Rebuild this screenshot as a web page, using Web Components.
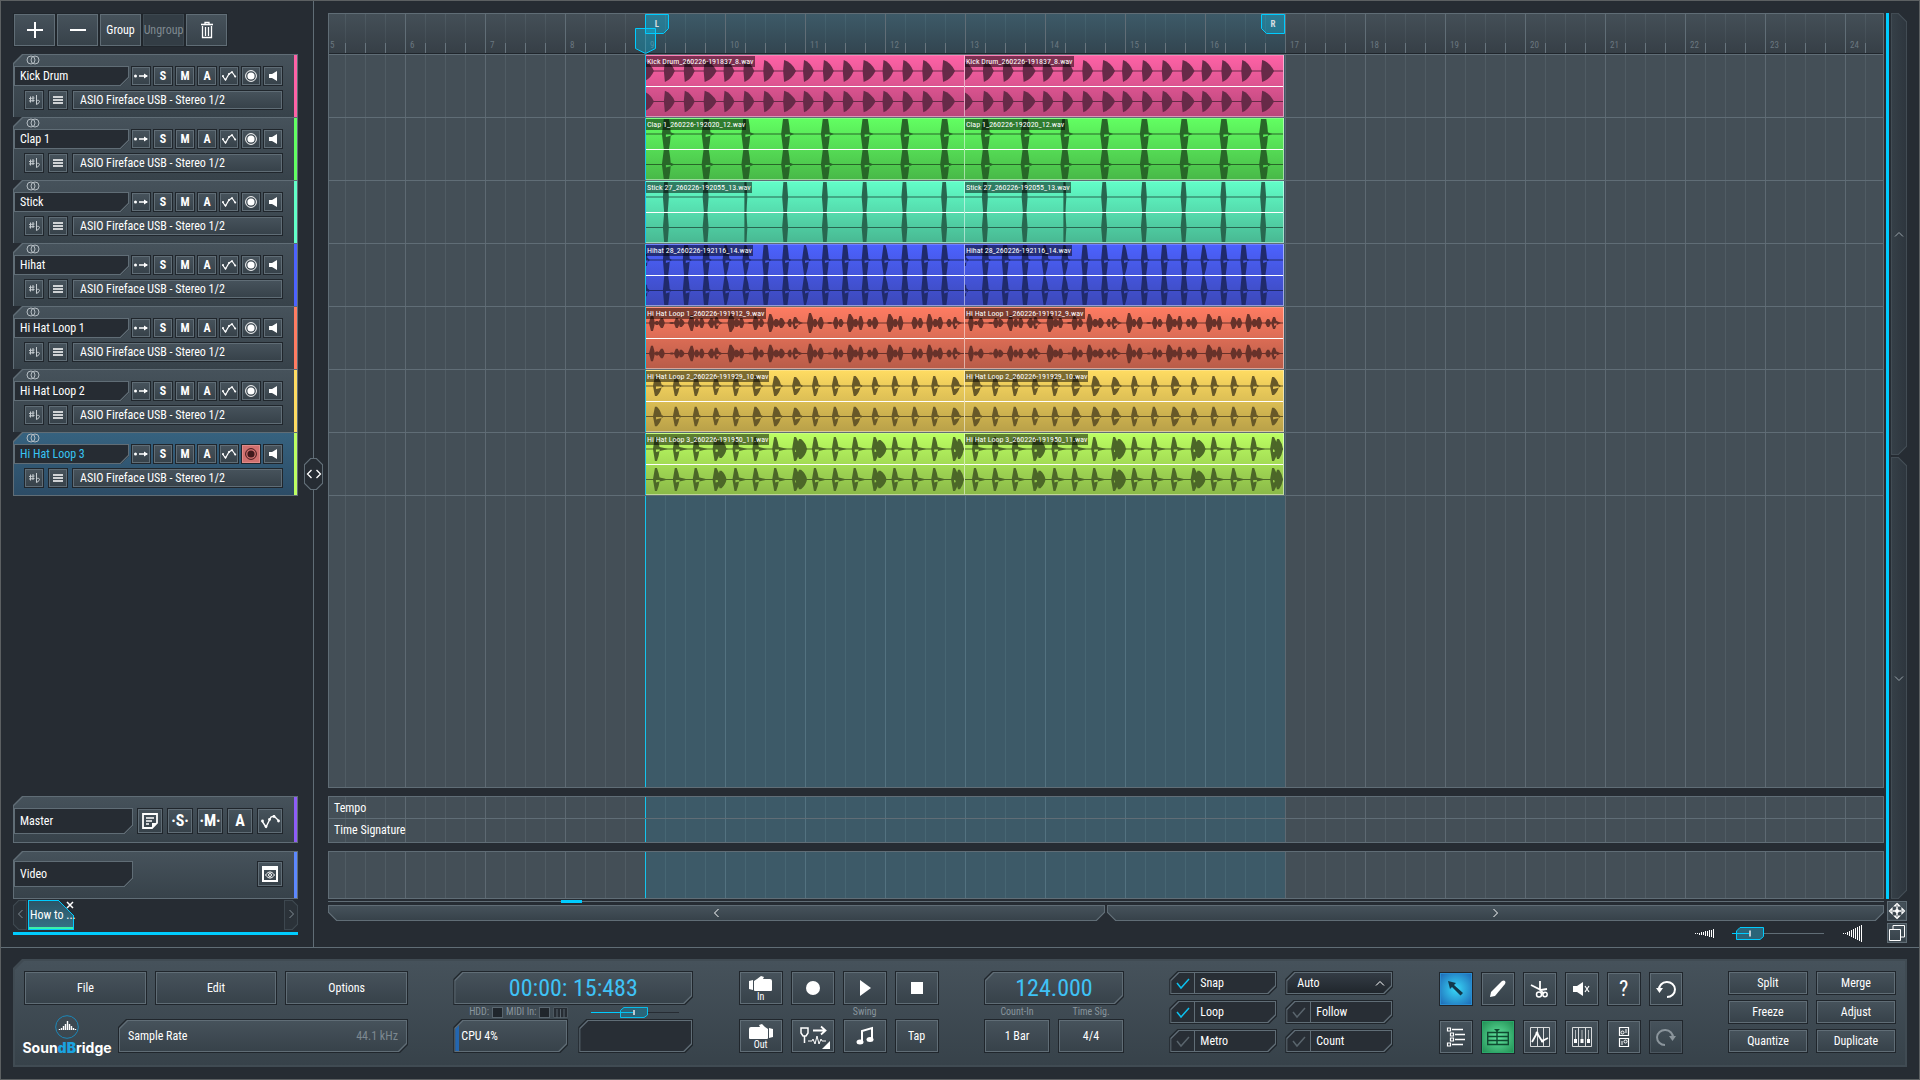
<!DOCTYPE html>
<html lang="en">
<head>
<meta charset="utf-8">
<title>SoundBridge</title>
<style>
    html, body {
        height: 100%;
        margin: 0;
    }
    body {
        --bg: #262c33;
        --line: #606d76;
        --edge: #20262c;
        --cyan: #00ccff;
        --face: linear-gradient(#46525b, #37424a);
        background: var(--bg);
        color: #fff;
        font: 12px/16px "Roboto Condensed", "Liberation Sans Narrow", "Liberation Sans", sans-serif;
    }
</style>
</head>
<body>
<daw-app></daw-app>

<script>
/**
 * Styles shared by every element
 */
const BASE = `
    * { box-sizing: border-box; }
    :host { display: block; box-sizing: border-box; }
    button, input, select { font: inherit; color: inherit; margin: 0; }
    svg { display: block; }
`;

/**
 * Icon drawings: [width, height, markup]
 */
const ICONS = {
    plus: [16, 16, '<path d="M8 0v16M0 8h16" stroke-width="2"/>'],
    minus: [16, 16, '<path d="M0 8h16" stroke-width="2"/>'],
    trash: [12, 16, '<path d="M0 2.500h12" stroke-width="1.600"/><path d="M4 3V.5h4V3M1.500 4v11.500h9V4M4.500 5v9M7.500 5v9" stroke-width="1.300"/>'],
    rings: [14, 10, '<circle cx="5" cy="5" r="4"/><circle cx="9" cy="5" r="4"/>'],
    route: [14, 8, '<circle cx="1.500" cy="4" r="1.500" class="f"/><path d="M5 4h8" stroke-width="1.500"/><path d="M10 1.500 14 4l-4 2.500z" class="f"/>'],
    curve: [14, 10, '<path d="M.5 5l3 4 3.500-6 3-2 3.500 5" stroke-width="1.200"/><circle cx="1" cy="5" r="1" class="f"/><circle cx="3.500" cy="8.500" r="1" class="f"/><circle cx="7" cy="3" r="1" class="f"/><circle cx="10" cy="1.200" r="1" class="f"/><circle cx="13.200" cy="5.500" r="1" class="f"/>'],
    curveBig: [19, 13, '<path d="M1 6l4 6 3-6 2-4 3-1 5 5" stroke-width="1.400"/><circle cx="1.500" cy="6" r="1.400" class="f"/><circle cx="5" cy="11.500" r="1.400" class="f"/><circle cx="8.500" cy="4.500" r="1.400" class="f"/><circle cx="13" cy="1.500" r="1.400" class="f"/><circle cx="17.500" cy="6" r="1.400" class="f"/>'],
    arm: [12, 12, '<circle cx="6" cy="6" r="5.400"/><circle cx="6" cy="6" r="3.600" class="f"/>'],
    speaker: [8, 10, '<path d="M0 3h3l5-3v10L3 7H0z" class="f"/>'],
    sharp: [11, 10, '<path d="M1.500 1.500v6M4 1v6M0 3.500l5.500-.5M0 6l5.500-.5M7.500 0v9.500c4-2 4-5 0-4"/>'],
    list: [10, 8, '<path d="M0 1h10M0 4h10M0 7h10" stroke-width="1.600"/>'],
    note: [16, 16, '<path d="M1 1h14v9l-5 5H1z" stroke-width="1.800"/><path d="M4 5h8M4 8h6M4 11h3" stroke-width="1.300"/><path d="M15 10h-5v5z" class="f"/>'],
    preview: [16, 16, '<path d="M1 2.500h14V15H1z" stroke-width="2"/><path d="M0 0h16v4H0z" class="f"/><path d="M3.500 9c3-4 6-4 9 0-3 4-6 4-9 0z"/><circle cx="8" cy="9" r="1.500"/>'],
    left: [5, 10, '<path d="M4.500 1l-4 4 4 4"/>'],
    right: [5, 10, '<path d="M.5 1l4 4-4 4"/>'],
    up: [10, 5, '<path d="M1 4.500l4-4 4 4"/>'],
    down: [10, 5, '<path d="M1 .5l4 4 4-4"/>'],
    split: [14, 10, '<path d="M4.500 1l-4 4 4 4M9.500 1l4 4-4 4" stroke-width="1.300"/>'],
    close: [6, 6, '<path d="M0 0l6 6M6 0L0 6" stroke-width="1.500"/>'],
    logo: [24, 24, '<circle cx="12" cy="12" r="11.300" stroke="#1c87b8"/><path d="M4.500 15v-1M6.500 15v-2M8.500 15v-4M10.500 15V9M12.500 15V6M14.500 15V9M16.500 15v-4M18.500 15v-2M20.500 15v-1" stroke-width="1.400"/>'],
    camIn: [24, 17, '<path d="M0 6l4-1v10l-4-1zM5 6l3-2 4-3 3 1-1 2h7q2 0 2 2v9q0 1-1 1H6q-1 0-1-1z" class="f"/>'],
    camOut: [24, 17, '<path d="M24 6l-4-1v10l4-1zM19 6l-3-2-3-3-3 1 1 2H2Q0 4 0 6v9q0 1 1 1h17q1 0 1-1z" class="f"/>'],
    record: [14, 14, '<circle cx="7" cy="7" r="7" class="f"/>'],
    play: [12, 16, '<path d="M1 0v16l11-8z" class="f"/>'],
    stop: [12, 12, '<path d="M0 0h12v12H0z" class="f"/>'],
    punch: [36, 24, '<path d="M6 4h7v5l-2 3H8L6 9zM9.500 12v7" stroke-width="1.500"/><path d="M18 6.500h12M26 2.500l4.500 4-4.500 4" stroke-width="1.800"/><path d="M13 17h4l1-2 2 5 2-8 2 8 2-5 1 2h4"/><path d="M35 17v8h-8z" class="f"/>'],
    music: [18, 18, '<path d="M6 15V4l10-3v11" stroke-width="2"/><ellipse cx="4" cy="15" rx="3.500" ry="2.500" class="f"/><ellipse cx="14" cy="12.500" rx="3.500" ry="2.500" class="f"/>'],
    piano: [15, 11, '<path d="M.5.500h14v10H.5z" fill="#262c33" stroke="#4d5860"/><path d="M4 2v9M7.500 2v9M11 2v9" stroke="#59656e"/>'],
    arrow: [16, 16, '<path d="M0 0l8 2-2 2 9 8-2.500 2.500L4 6 2 8z" fill="#12384a" stroke="none"/>'],
    pencil: [18, 18, '<path d="M1 17l1-5L13 1q2-1 3 0t0 3L6 16z" class="f"/>'],
    scissors: [18, 18, '<path d="M9 1v9l4 4M0 5l10 5 6-1" stroke-width="1.800"/><circle cx="8" cy="14.500" r="2.500" stroke-width="1.500"/><circle cx="14" cy="14.500" r="2.200" stroke-width="1.500"/>'],
    mute: [17, 14, '<path d="M0 4h4l6-4v14l-6-4H0z" class="f"/><path d="M12 4l4 6M16 4l-4 6" stroke-width="1.200"/>'],
    undo: [20, 18, '<path d="M3 10a8 7.500 0 1 1 8 7" stroke-width="2"/><path d="M0 8h7l-3.500 5z" class="f"/>'],
    redo: [20, 18, '<path d="M17 10a8 7.500 0 1 0-8 7" stroke-width="2"/><path d="M20 8h-7l3.500 5z" class="f"/>'],
    tree: [20, 20, '<path d="M1.500 1h3v3h-3zM4.500 6h3v3h-3zM4.500 11h3v3h-3zM1.500 16h3v3h-3z" stroke-width="1.200"/><path d="M6 2.500h11M9 7.500h10M9 12.500h10M6 17.500h11" stroke-width="1.600"/>'],
    grid: [22, 16, '<path d="M.7 3.500h20.600v12H.7zM1 7.500h20M1 11.500h20M10 2v14" stroke="#0f4a30" stroke-width="1.400"/><path d="M7 0h6l-3 3z" fill="#0f4a30" stroke="none"/>'],
    automation: [20, 20, '<path d="M.5.500h19v19H.5zM7.500 1v18M13.500 1v18" opacity=".8"/><path d="M2 15l5-9 5 8 6-3" stroke-width="1.800"/><circle cx="7" cy="6" r="1.500" class="f"/><circle cx="12.500" cy="14" r="1.500" class="f"/>'],
    mixer: [20, 20, '<path d="M.5.500h19v19H.5zM6.500 1v18M13.500 1v18" opacity=".8"/><path d="M3.500 3v9M10 3v9M16.500 3v9" opacity=".6"/><path d="M2 12h3v4H2zM8.500 12h3v4h-3zM15 12h3v4h-3z" class="f"/>'],
    rack: [10, 20, '<path d="M.5.500h9v8h-9zM.5 11.500h9v8h-9z" stroke-width="1.200"/><circle cx="3.500" cy="5.500" r="1.500"/><circle cx="6.500" cy="14.500" r="1.500"/><path d="M7 2v4M3 14v4"/>'],
    move: [16, 16, '<path d="M8 .5l2.500 2.500h-5zM8 15.500l2.500-2.500h-5zM.5 8l2.500-2.500v5zM15.500 8l-2.500-2.500v5z" stroke-width="1.200"/><path d="M8 4v8M4 8h8" stroke-width="1.500"/><circle cx="8" cy="8" r="2" class="f"/>'],
    windows: [16, 16, '<path d="M4 4V.5h11.500V12H12M.5 4.500h11v11H.5z"/>'],
    zoomOut: [20, 9, '<path d="M1.500 4v1M3.500 4v1M5.500 4v2M7.500 3v3M9.500 3v3M11.500 2v5M13.500 2v5M15.500 1v7M17.500 1v7M19.500 0v9"/>'],
    zoomIn: [20, 17, '<path d="M1.500 8v1M3.500 8v1M5.500 7v3M7.500 6v5M9.500 5v7M11.500 4v9M13.500 3v11M15.500 2v13M17.500 1v15M19.500 0v17"/>'],
    check: [14, 12, '<path d="M1 6l4 5 8-9" stroke-width="1.500"/>']
};

class DawIcon extends HTMLElement {
    constructor() {
        super();
        this.attachShadow({ mode: 'open' });
    }
    connectedCallback() {
        const [w, h, body] = ICONS[this.getAttribute('name')];
        this.shadowRoot.innerHTML = `
            <style>
                :host { display: inline-block; flex: none; }
                svg { display: block; overflow: visible; }
                .f { fill: currentColor; stroke: none; }
            </style>
            <svg width="${w}" height="${h}" viewBox="0 0 ${w} ${h}" fill="none" stroke="currentColor" aria-hidden="true">${body}</svg>
        `;
    }
}
customElements.define('daw-icon', DawIcon);

/**
 * Square bevelled button, the face is set with --face
 */
class DawButton extends HTMLElement {
    constructor() {
        super();
        this.attachShadow({ mode: 'open' });
    }
    connectedCallback() {
        const label = this.getAttribute('label');
        this.shadowRoot.innerHTML = `
            <style>${BASE}
                :host { border: 1px solid var(--edge); }
                :host([dim]) { color: #8b959c; --line: #4b565f; }
                :host([off]) { --face: #333d45; --line: #3d4850; color: #7f8990; }
                button {
                    display: flex;
                    flex-direction: column;
                    align-items: center;
                    justify-content: center;
                    width: 100%;
                    height: 100%;
                    padding: 0;
                    border: 1px solid var(--line);
                    background: var(--face);
                    white-space: nowrap;
                }
            </style>
            <button type="button" ${label ? `aria-label="${label}"` : ''}><slot></slot></button>
        `;
    }
}
customElements.define('daw-button', DawButton);

/**
 * Box with cut corners and a line that follows them.
 * --rim is the width of the dark edge outside of the line
 */
class CutBox extends HTMLElement {
    constructor() {
        super();
        this.attachShadow({ mode: 'open' });
        this.shadowRoot.innerHTML = `
            <style>${BASE}
                :host {
                    --tl: 8px; --tr: 0px; --br: 8px; --bl: 0px;
                    --shape: polygon(var(--tl) 0, calc(100% - var(--tr)) 0, 100% var(--tr), 100% calc(100% - var(--br)), calc(100% - var(--br)) 100%, var(--bl) 100%, 0 calc(100% - var(--bl)), 0 var(--tl));
                    display: grid;
                    padding: var(--rim, 1px);
                    background: var(--edge);
                    clip-path: var(--shape);
                }
                .line {
                    display: grid;
                    min-width: 0;
                    padding: 1px;
                    background: var(--line);
                    clip-path: var(--shape);
                }
                .fill {
                    display: flex;
                    align-items: center;
                    min-width: 0;
                    background: var(--fill, linear-gradient(#20262c, #343c45));
                    clip-path: var(--shape);
                }
            </style>
            <div class="line"><div class="fill"><slot></slot></div></div>
        `;
    }
}
customElements.define('cut-box', CutBox);

class DawSlider extends HTMLElement {
    constructor() {
        super();
        this.attachShadow({ mode: 'open' });
    }
    connectedCallback() {
        const value = this.getAttribute('value');
        this.shadowRoot.innerHTML = `
            <style>${BASE}
                input {
                    appearance: none;
                    display: block;
                    width: 100%;
                    height: 14px;
                    background: linear-gradient(90deg, var(--cyan) ${value}%, var(--track, var(--line)) 0) center / 100% 1px no-repeat;
                }
                input::-webkit-slider-thumb {
                    appearance: none;
                    width: 28px;
                    height: var(--thumb, 13px);
                    background: url("data:image/svg+xml,%3Csvg xmlns='http://www.w3.org/2000/svg' viewBox='0 0 28 13' preserveAspectRatio='none'%3E%3Cpath d='M4 .5h23.500v9l-3.500 3H.5V4z' fill='%232b6579' stroke='%2300ccff'/%3E%3Cpath d='M1 6.500h13' stroke='%2300ccff'/%3E%3Cpath d='M14 3.500v6' stroke='%23c0cbd0' stroke-width='2'/%3E%3C/svg%3E") 0 0 / 100% 100%;
                }
            </style>
            <input type="range" min="0" max="100" value="${value}" aria-label="${this.getAttribute('label')}">
        `;
    }
}
customElements.define('daw-slider', DawSlider);

/**
 * Tick box with its label in a cut box
 */
class DawToggle extends HTMLElement {
    constructor() {
        super();
        this.attachShadow({ mode: 'open' });
    }
    connectedCallback() {
        this.shadowRoot.innerHTML = `
            <style>${BASE}
                cut-box { height: 100%; --fill: #282e35; }
                label {
                    display: flex;
                    align-items: center;
                    width: 100%;
                    height: 100%;
                }
                input { position: absolute; opacity: 0; }
                .tick {
                    display: grid;
                    place-items: center;
                    width: 24px;
                    height: 100%;
                    margin-right: 5px;
                    border-right: 1px solid var(--line);
                    color: #59646c;
                }
                input:checked + .tick { color: #0cc0ee; }
            </style>
            <cut-box>
                <label>
                    <input type="checkbox" ${this.hasAttribute('checked') ? 'checked' : ''}>
                    <span class="tick"><daw-icon name="check"></daw-icon></span>
                    <slot></slot>
                </label>
            </cut-box>
        `;
    }
}
customElements.define('daw-toggle', DawToggle);

/**
 * Header of one channel in the left column
 */
class TrackHeader extends HTMLElement {
    constructor() {
        super();
        this.attachShadow({ mode: 'open' });
    }
    connectedCallback() {
        const name = this.getAttribute('name');
        this.shadowRoot.innerHTML = `
            <style>${BASE}
                :host {
                    --shape: polygon(9px 0, 100% 0, 100% 100%, 0 100%, 0 9px);
                    padding: 1px 1px 0;
                    background: var(--line);
                    clip-path: var(--shape);
                }
                :host([selected]) { --body: linear-gradient(#36627f, #2c4c66); }
                .body {
                    display: flex;
                    background: var(--body, var(--face));
                    clip-path: var(--shape);
                }
                .main { flex: 1; min-width: 0; padding-bottom: 7px; }
                .color { width: 3px; background: ${this.getAttribute('color')}; }
                .link { display: flex; height: 11px; padding: 0 12px; color: #b4bcc2; }
                .row { display: flex; gap: 2px; height: 20px; padding-right: 11px; }
                .row + .row { margin-top: 4px; padding-left: 10px; gap: 4px; }
                .name {
                    flex: 1;
                    min-width: 0;
                    --rim: 0px;
                    --fill: #262c33;
                    --tl: 0px;
                }
                .name input {
                    width: 100%;
                    padding: 0 5px;
                    border: 0;
                    background: none;
                    outline: none;
                }
                :host([selected]) .name input { color: #38c4f4; }
                daw-button { width: 20px; font-weight: bold; }
                .armed { --face: #d0706f; --line: #e08a88; color: #40191c; }
                .soft { color: #c6ccd0; }
                .device {
                    flex: 1;
                    min-width: 0;
                    border: 1px solid var(--edge);
                }
                select {
                    appearance: none;
                    display: block;
                    width: 100%;
                    height: 100%;
                    padding: 0 6px;
                    border: 1px solid var(--line);
                    border-radius: 0;
                    background: var(--face);
                }
            </style>
            <div class="body">
                <div class="main">
                    <div class="link"><daw-icon name="rings"></daw-icon></div>
                    <div class="row">
                        <cut-box class="name"><input type="text" value="${name}" aria-label="Track name"></cut-box>
                        <daw-button label="Routing"><daw-icon name="route"></daw-icon></daw-button>
                        <daw-button>S</daw-button>
                        <daw-button>M</daw-button>
                        <daw-button>A</daw-button>
                        <daw-button label="Automation"><daw-icon name="curve"></daw-icon></daw-button>
                        <daw-button label="Record arm" ${this.hasAttribute('selected') ? 'class="armed"' : ''}><daw-icon name="arm"></daw-icon></daw-button>
                        <daw-button label="Monitor"><daw-icon name="speaker"></daw-icon></daw-button>
                    </div>
                    <div class="row">
                        <daw-button class="soft" label="Transpose"><daw-icon name="sharp"></daw-icon></daw-button>
                        <daw-button label="Channel menu"><daw-icon name="list"></daw-icon></daw-button>
                        <div class="device">
                            <select aria-label="Output"><option>ASIO Fireface USB - Stereo 1/2</option></select>
                        </div>
                    </div>
                </div>
                <div class="color"></div>
            </div>
        `;
    }
}
customElements.define('track-header', TrackHeader);

/**
 * Master and video channels, buttons are slotted
 */
class BusHeader extends HTMLElement {
    constructor() {
        super();
        this.attachShadow({ mode: 'open' });
    }
    connectedCallback() {
        this.shadowRoot.innerHTML = `
            <style>${BASE}
                :host {
                    --shape: polygon(9px 0, 100% 0, 100% 100%, 0 100%, 0 9px);
                    padding: 1px;
                    background: var(--line);
                    clip-path: var(--shape);
                }
                .body {
                    display: flex;
                    height: 100%;
                    background: var(--face);
                    clip-path: var(--shape);
                }
                .row {
                    display: flex;
                    flex: 1;
                    gap: 4px;
                    height: 26px;
                    margin-top: var(--drop, 11px);
                    padding-right: 11px;
                }
                .name { width: 119px; margin-right: auto; --rim: 0px; --fill: #262c33; --tl: 0px; }
                input { width: 100%; padding: 0 5px; border: 0; background: none; outline: none; }
                .color { width: 3px; background: ${this.getAttribute('color')}; }
                ::slotted(daw-button) { width: 26px; }
            </style>
            <div class="body">
                <div class="row">
                    <cut-box class="name"><input type="text" value="${this.getAttribute('name')}" aria-label="Channel name"></cut-box>
                    <slot></slot>
                </div>
                <div class="color"></div>
            </div>
        `;
    }
}
customElements.define('bus-header', BusHeader);

/**
 * Each wave is a list of hits: [x, half height, rise, fall, tail]
 */
const every = (n, step, start, fn) => Array.from({ length: n }, (_, i) => fn(start + i * step, i));

const WAVES = {
    kick: [[-1, 10, 1, 9, 0], ...every(15, 20, 20, (x, i) => [x, 11, 2, i % 4 == 2 ? 11 : 9, 0])],
    clap: every(8, 40, 20, x => [x, 24, 4, 5, 4]),
    stick: every(8, 40, 20, (x, i) => [x, 24, i == 2 ? 1 : 3, i == 2 ? 2 : 3, 0]),
    hihat: [[0, 6, 1, 2, 2], ...every(15, 20, 20, (x, i) => [x, i % 4 == 3 || i == 4 ? 15 : 22, 3, 4, 2])],
    loop1: [
        [6, 8, 3, 3, 0], [11, 2, 3, 3, 0], [16, 5, 4, 3, 0], [26, 1, 3, 3, 0], [31, 5, 3, 3, 0], [35, 4, 2, 4, 0],
        [46, 8, 4, 3, 0], [51, 4, 3, 3, 0], [56, 5, 3, 3, 0], [66, 5, 4, 3, 0], [71, 6, 3, 3, 3], [85, 9, 3, 5, 0],
        [91, 4, 3, 4, 0], [96, 5, 3, 3, 0], [105, 1, 3, 3, 0], [110, 7, 3, 4, 0], [116, 4, 3, 3, 0], [125, 9, 3, 4, 0],
        [131, 4, 4, 4, 0], [136, 5, 3, 4, 0], [145, 4, 3, 2, 0], [150, 6, 3, 4, 4], [165, 10, 3, 4, 0], [170, 4, 3, 3, 0],
        [176, 6, 4, 3, 0], [185, 1, 3, 3, 0], [191, 6, 3, 3, 0], [196, 4, 3, 3, 0], [205, 9, 3, 5, 0], [211, 4, 4, 3, 0],
        [216, 7, 3, 3, 0], [225, 4, 3, 3, 0], [230, 6, 3, 4, 0], [245, 9, 3, 5, 0], [251, 4, 4, 3, 0], [256, 7, 3, 3, 0],
        [270, 6, 3, 4, 0], [276, 5, 3, 3, 0], [285, 9, 3, 4, 0], [291, 4, 3, 4, 0], [296, 6, 4, 3, 0], [305, 4, 3, 3, 0],
        [311, 6, 3, 3, 4]
    ],
    loop2: every(16, 20, 10, (x, i) => [x, i % 4 == 3 ? 9 : 10, 3, i % 5 == 0 || i == 6 || i == 7 ? 6 : 4, 2]),
    loop3: every(16, 20, 10, (x, i) => [x, 12, 3, i % 4 == 3 ? 5 : 4, 8]).concat(
        [[75, 9, 3, 6, 0], [155, 10, 5, 7, 0], [235, 9, 4, 7, 0], [315, 10, 4, 5, 0]])
};

function wavePath(hits, mid) {
    return hits.map(([x, h, rise, fall, tail]) => {
        let d = '';
        for (const s of [1, -1]) {
            const top = mid - s * h;
            d += `M${x - rise} ${mid} L${x - 1} ${top} H${x + 1} Q${x + fall - 1} ${mid - s * h * .6} ${x + fall} ${mid}z`;
        }
        if (tail) {
            d += `M${x} ${mid - 3} Q${x + fall} ${mid - 2} ${x + tail + fall} ${mid} Q${x + fall} ${mid + 2} ${x} ${mid + 3}z`;
        }
        return d;
    });
}

/**
 * Drum hits start at full height and run out to a point
 */
function drumPath(hits, mid) {
    return hits.map(([x, h, rise, fall]) =>
        `M${x - rise} ${mid} L${x - 1} ${mid - h} Q${x + fall * .6} ${mid - h * .8} ${x + fall} ${mid} Q${x + fall * .6} ${mid + h * .8} ${x - 1} ${mid + h}z`);
}

/**
 * One audio clip with two channels of waveform
 */
class AudioClip extends HTMLElement {
    constructor() {
        super();
        this.attachShadow({ mode: 'open' });
    }
    connectedCallback() {
        const { top, bottom, dark, wave } = this.dataset;
        const draw = wave === 'kick' ? drumPath : wavePath;
        const hits = draw(WAVES[wave], 15).map(d => `<path fill-rule="nonzero" d="${d}"/>`).join('');
        const channel = `<svg viewBox="0 0 320 30" preserveAspectRatio="none">${hits}<path d="M0 14.500h320v1H0z"/></svg>`;
        this.shadowRoot.innerHTML = `
            <style>${BASE}
                :host {
                    position: relative;
                    flex: none;
                    width: 319px;
                    height: 62px;
                    border-right: 1px solid rgba(255, 255, 255, .5);
                    background: linear-gradient(${top}, ${bottom});
                    box-shadow: inset 0 -1px rgba(255, 255, 255, .45), inset 0 1px rgba(255, 255, 255, .2);
                }
                svg { width: 100%; height: 30px; fill: ${dark}; }
                svg:first-of-type { height: 32px; padding-top: 1px; border-bottom: 1px solid #fff; }
                svg:last-of-type { height: 29px; }
                span {
                    position: absolute;
                    left: 0;
                    top: 1px;
                    padding: 0 1px;
                    background: rgba(0, 0, 0, .5);
                    font-size: 8px;
                    line-height: 11px;
                    white-space: nowrap;
                }
            </style>
            ${channel}${channel}
            <span><slot></slot></span>
        `;
    }
}
customElements.define('audio-clip', AudioClip);

/**
 * Surface ruled in bars (80px) and beats (20px), with the loop range tinted
 */
class BeatGrid extends HTMLElement {
    constructor() {
        super();
        this.attachShadow({ mode: 'open' });
        this.shadowRoot.innerHTML = `
            <style>${BASE}
                :host {
                    position: relative;
                    overflow: hidden;
                    border: 1px solid var(--line);
                    background:
                        repeating-linear-gradient(90deg, #5d6972 0 1px, transparent 1px 80px) -4px 0 / 2400px 100%,
                        repeating-linear-gradient(90deg, #505c64 0 1px, transparent 1px 20px) -4px 0 / 2400px 100%,
                        #444f57;
                }
                .loop {
                    position: absolute;
                    left: 316px;
                    top: 0;
                    bottom: 0;
                    width: 640px;
                    border-left: 1px solid #14c4ec;
                    background: rgba(0, 200, 255, .1);
                    pointer-events: none;
                }
                .content { position: relative; }
            </style>
            <div class="loop"></div>
            <div class="content"><slot></slot></div>
        `;
    }
}
customElements.define('beat-grid', BeatGrid);

class TimeRuler extends HTMLElement {
    constructor() {
        super();
        this.attachShadow({ mode: 'open' });
        const bars = Array.from({ length: 20 }, (_, i) => `<li>${i + 5}</li>`).join('');
        this.shadowRoot.innerHTML = `
            <style>${BASE}
                :host {
                    position: relative;
                    height: 40px;
                    border-bottom: 1px solid var(--edge);
                    background: linear-gradient(rgba(38, 44, 51, 0), rgba(38, 44, 51, .45));
                }
                ol {
                    display: flex;
                    height: 39px;
                    margin: 0 0 0 -4px;
                    padding: 0;
                    overflow: hidden;
                    list-style: none;
                    color: #6a7780;
                    font-size: 9px;
                    line-height: 12px;
                    background: repeating-linear-gradient(90deg, #66737c 0 1px, transparent 1px 20px) 0 100% / 100% 10px no-repeat;
                }
                li {
                    flex: none;
                    width: 80px;
                    padding: 25px 0 0 4px;
                    border-left: 1px solid #606d76;
                }
                svg { position: absolute; fill: rgba(0, 204, 255, .3); stroke: var(--cyan); }
                .l { left: 316px; top: 0; }
                .r { left: 932px; top: 0; }
                .head { left: 306px; top: 14px; }
                b { position: absolute; top: 4px; width: 24px; font-size: 9px; line-height: 12px; text-align: center; color: #d5dde1; }
                .lb { left: 316px; }
                .rb { left: 932px; }
            </style>
            <ol>${bars}</ol>
            <svg class="l" width="24" height="20"><path d="M.5.500h23v14l-5 5H.5z"/></svg><b class="lb">L</b>
            <svg class="r" width="24" height="20"><path d="M.5.500h23v19h-18l-5-5z"/></svg><b class="rb">R</b>
            <svg class="head" width="21" height="26"><path d="M.5.500h20v20l-10 5-10-5z"/></svg>
        `;
    }
}
customElements.define('time-ruler', TimeRuler);

const TRACKS = [
    { name: 'Kick Drum', file: 'Kick Drum_260226-191837_8.wav', wave: 'kick', top: '#ff62a6', bottom: '#b8467a', dark: '#672a48' },
    { name: 'Clap 1', file: 'Clap 1_260226-192020_12.wav', wave: 'clap', top: '#62ff62', bottom: '#48b848', dark: '#286728' },
    { name: 'Stick', file: 'Stick 27_260226-192055_13.wav', wave: 'stick', top: '#62ffc8', bottom: '#48b892', dark: '#286750' },
    { name: 'Hihat', file: 'Hihat 28_260226-192116_14.wav', wave: 'hihat', top: '#4c62ff', bottom: '#3c48b8', dark: '#202a6b' },
    { name: 'Hi Hat Loop 1', file: 'Hi Hat Loop 1_260226-191912_9.wav', wave: 'loop1', top: '#ff7c62', bottom: '#b85c48', dark: '#67322a' },
    { name: 'Hi Hat Loop 2', file: 'Hi Hat Loop 2_260226-191929_10.wav', wave: 'loop2', top: '#ffdc62', bottom: '#b8a048', dark: '#675828' },
    { name: 'Hi Hat Loop 3', file: 'Hi Hat Loop 3_260226-191950_11.wav', wave: 'loop3', top: '#bcff62', bottom: '#8ab848', dark: '#4c6728', selected: true }
];

/**
 * Left column with the channel headers
 */
class TrackPanel extends HTMLElement {
    constructor() {
        super();
        this.attachShadow({ mode: 'open' });
        this.shadowRoot.innerHTML = `
            <style>${BASE}
                :host {
                    display: flex;
                    flex-direction: column;
                    padding: 12px 15px 12px 12px;
                }
                .tools { display: flex; height: 34px; margin-bottom: 7px; }
                .tools daw-button { width: 43px; }
                .tracks { flex: 1; }
                .tracks track-header:last-child { padding-bottom: 1px; }
                bus-header { height: 47px; margin-bottom: 8px; }
                .master daw-button { font-size: 16px; font-weight: bold; }
                .video { --drop: 9px; height: 48px; margin-bottom: 1px; }
                nav { display: flex; gap: 1px; height: 30px; }
                nav cut-box { width: 14px; --rim: 0px; --line: #3d474f; --fill: #2b3239; color: #828d95; }
                .prev { --br: 0px; --bl: 5px; --tl: 5px; }
                .next { --tl: 0px; --tr: 5px; --br: 5px; margin-left: auto; }
                nav cut-box button { width: 100%; padding: 0 4px; border: 0; background: none; }
                .tab {
                    position: relative;
                    width: 46px;
                    border: 1px solid var(--cyan);
                    background: linear-gradient(#2c5466, #347287);
                    box-shadow: inset 0 -2px #3cf0a8;
                }
                .tab a {
                    position: relative;
                    display: block;
                    padding: 6px 1px;
                    color: #fff;
                    text-decoration: none;
                    white-space: nowrap;
                }
                .tab svg { position: absolute; right: -1px; top: -1px; }
                .tab button { position: absolute; right: 0; top: 0; padding: 0; border: 0; background: none; line-height: 6px; }
                .bar { height: 3px; margin-top: 2px; background: var(--cyan); }
            </style>
            <div class="tools">
                <daw-button label="Add track"><daw-icon name="plus"></daw-icon></daw-button>
                <daw-button label="Remove track"><daw-icon name="minus"></daw-icon></daw-button>
                <daw-button>Group</daw-button>
                <daw-button off>Ungroup</daw-button>
                <daw-button label="Delete"><daw-icon name="trash"></daw-icon></daw-button>
            </div>
            <div class="tracks">
                ${TRACKS.map(t => `<track-header name="${t.name}" color="${t.top}" ${t.selected ? 'selected' : ''}></track-header>`).join('')}
            </div>
            <bus-header class="master" name="Master" color="#8e5cf8">
                <daw-button label="Notes"><daw-icon name="note"></daw-icon></daw-button>
                <daw-button>·S·</daw-button>
                <daw-button>·M·</daw-button>
                <daw-button>A</daw-button>
                <daw-button label="Automation"><daw-icon name="curveBig"></daw-icon></daw-button>
            </bus-header>
            <bus-header class="video" name="Video" color="#5c88ff">
                <daw-button label="Preview"><daw-icon name="preview"></daw-icon></daw-button>
            </bus-header>
            <nav>
                <cut-box class="prev"><button type="button" aria-label="Previous"><daw-icon name="left"></daw-icon></button></cut-box>
                <div class="tab">
                    <svg width="16" height="16"><path d="M0 0h16v16z" fill="#262c33"/><path d="M0 0l16 16" stroke="#00ccff"/></svg>
                    <a href="#project">How to ...</a>
                    <button type="button" aria-label="Close"><daw-icon name="close"></daw-icon></button>
                </div>
                <cut-box class="next"><button type="button" aria-label="Next"><daw-icon name="right"></daw-icon></button></cut-box>
            </nav>
            <div class="bar"></div>
        `;
    }
}
customElements.define('track-panel', TrackPanel);

/**
 * Arrangement area with its scroll bars
 */
class ArrangeView extends HTMLElement {
    constructor() {
        super();
        this.attachShadow({ mode: 'open' });
        const clip = t => `<audio-clip data-wave="${t.wave}" data-top="${t.top}" data-bottom="${t.bottom}" data-dark="${t.dark}">${t.file}</audio-clip>`;
        this.shadowRoot.innerHTML = `
            <style>${BASE}
                :host {
                    display: grid;
                    grid-template-columns: minmax(0, 1fr) 21px;
                    grid-template-rows: minmax(0, 1fr) 44px;
                    column-gap: 2px;
                    row-gap: 1px;
                    padding: 12px 12px 3px 14px;
                }
                .view { display: flex; flex-direction: column; gap: 8px; min-width: 0; }
                .lanes { flex: 1; }
                .lane {
                    display: flex;
                    height: 63px;
                    padding-left: 317px;
                    border-top: 1px solid #606d76;
                }
                .end { border-top: 1px solid #606d76; }
                .tempo { height: 47px; }
                .tempo div { height: 21px; padding: 3px 5px; }
                .tempo div + div { height: 24px; border-top: 1px solid #606d76; }
                .clips { height: 48px; }
                .vertical { display: grid; grid-template-columns: 3px 16px; gap: 2px; }
                .vertical .bar { background: var(--cyan); }
                .halves { display: flex; flex-direction: column; gap: 2px; min-height: 0; }
                .halves cut-box {
                    flex: 1;
                    --tl: 0px; --tr: 8px; --br: 8px; --rim: 0px;
                    --line: #424c54; --fill: linear-gradient(90deg, #353f47, #2e363e);
                    color: #9aa4ab;
                }
                .scroll button { width: 100%; height: 100%; padding: 0; border: 0; background: none; line-height: 10px; }
                .scroll daw-icon { vertical-align: middle; }
                .under { min-width: 0; }
                .overview { height: 5px; background: linear-gradient(var(--line), var(--line)) 0 1px / 100% 1px no-repeat; }
                .overview i { display: block; width: 21px; height: 3px; margin-left: 15%; background: var(--cyan); }
                .horizontal { display: flex; gap: 2px; height: 16px; }
                .horizontal cut-box { flex: 1; --tl: 0px; --rim: 0px; --bl: 8px; --fill: var(--face); }
                .zoom { display: flex; align-items: center; justify-content: flex-end; gap: 18px; height: 24px; padding-right: 22px; }
                .zoom daw-slider { width: 92px; }
                .corner { display: flex; flex-direction: column; gap: 2px; padding: 1px 0 0 1px; }
                .corner daw-button { height: 20px; --edge: #606d76; --line: #3f4a52; }
            </style>
            <div class="view">
                <beat-grid class="lanes">
                    <time-ruler></time-ruler>
                    ${TRACKS.map(t => `<div class="lane">${clip(t)}${clip(t)}</div>`).join('')}
                    <div class="end"></div>
                </beat-grid>
                <beat-grid class="tempo"><div>Tempo</div><div>Time Signature</div></beat-grid>
                <beat-grid class="clips"></beat-grid>
            </div>
            <div class="vertical scroll">
                <div class="bar"></div>
                <div class="halves">
                    <cut-box><button type="button" aria-label="Scroll up"><daw-icon name="up"></daw-icon></button></cut-box>
                    <cut-box><button type="button" aria-label="Scroll down"><daw-icon name="down"></daw-icon></button></cut-box>
                </div>
            </div>
            <div class="under">
                <div class="overview"><i></i></div>
                <div class="horizontal scroll">
                    <cut-box><button type="button" aria-label="Scroll left"><daw-icon name="left"></daw-icon></button></cut-box>
                    <cut-box><button type="button" aria-label="Scroll right"><daw-icon name="right"></daw-icon></button></cut-box>
                </div>
                <div class="zoom">
                    <daw-icon name="zoomOut"></daw-icon>
                    <daw-slider value="6" label="Zoom"></daw-slider>
                    <daw-icon name="zoomIn"></daw-icon>
                </div>
            </div>
            <div class="corner">
                <daw-button label="Move"><daw-icon name="move"></daw-icon></daw-button>
                <daw-button label="Windows"><daw-icon name="windows"></daw-icon></daw-button>
            </div>
        `;
    }
}
customElements.define('arrange-view', ArrangeView);

/**
 * Bottom bar: menus, counters, transport and tools
 */
class TransportBar extends HTMLElement {
    constructor() {
        super();
        this.attachShadow({ mode: 'open' });
        this.shadowRoot.innerHTML = `
            <style>${BASE}
                :host { padding: 11px 12px 12px; border-top: 1px solid var(--line); }
                .panel { --tl: 9px; --br: 0px; --edge: var(--line); --line: #404b53; --fill: linear-gradient(#46525b, #37424a); }
                .groups {
                    --line: #606d76;
                    --edge: #20262c;
                    display: flex;
                    flex: 1;
                    justify-content: space-between;
                    padding: 10px 9px 11px;
                }
                .group { display: grid; grid-template-rows: 34px 14px 34px; align-content: start; }
                .menus { grid-template-columns: repeat(3, 1fr); column-gap: 8px; width: 384px; }
                .brand {
                    display: flex;
                    flex-direction: column;
                    align-items: center;
                    gap: 1px;
                    grid-area: 3 / 1;
                    width: 86px;
                    height: 42px;
                    margin-top: -4px;
                    font: bold 14px/16px Inter, sans-serif;
                }
                .brand b { color: #1aa3e0; }
                .rate { grid-column: 1 / 4; grid-row: 3; margin-left: 94px; --fill: var(--face); }
                .rate span { flex: 1; padding-left: 8px; }
                .rate output { padding-right: 8px; color: #7d8991; }
                .counter { grid-template-columns: 1fr 1fr; column-gap: 10px; width: 240px; }
                .lcd { grid-column: 1 / -1; color: #3fc2f5; font-size: 24px; line-height: 28px; }
                .lcd output { flex: 1; text-align: center; }
                .status { display: flex; align-items: center; justify-content: flex-end; gap: 3px; color: #89959d; font-size: 10px; line-height: 14px; }
                .led { width: 11px; height: 11px; border: 1px solid #59656e; background: #20262c; }
                .status daw-slider { width: 88px; margin-right: 14px; --track: #262c33; --thumb: 11px; }
                .cpu i { width: 4px; height: 100%; margin-right: 2px; background: #2366b0; }
                .blank { --fill: #282e35; }
                .transport { grid-template-columns: repeat(4, 44px); column-gap: 8px; }
                .transport small, .tempo small { font-size: 10px; line-height: 14px; text-align: center; color: #89959d; }
                .swing { grid-column: 3 / 5; width: 44px; }
                .cam { font-size: 10px; line-height: 10px; }
                .tempo { grid-template-columns: 66px 66px; column-gap: 8px; }
                .toggles { grid-template: repeat(3, 24px) / 108px 108px; gap: 5px 8px; }
                .snap { --fill: linear-gradient(#343c45, #20262c); }
                .snap select { appearance: none; width: 100%; height: 100%; padding: 0 10px; border: 0; background: none; }
                .snap daw-icon { margin: 0 6px 0 -16px; pointer-events: none; }
                .tools { grid-template-columns: repeat(6, 34px); column-gap: 8px; margin-top: 1px; }
                .tools > :nth-child(n+7) { grid-row: 3; }
                .blue { --face: radial-gradient(#38d8f8, #1f6cb8); --line: #2a8cd0; }
                .green { --face: radial-gradient(#62e6a0, #239055); --line: #2aa86a; }
                .help { font-size: 22px; line-height: 24px; }
                .actions { grid-template: repeat(3, 24px) / 80px 80px; gap: 5px 8px; }
            </style>
            <cut-box class="panel">
                <div class="groups">
                    <div class="group menus">
                        <daw-button>File</daw-button>
                        <daw-button>Edit</daw-button>
                        <daw-button>Options</daw-button>
                        <cut-box class="rate"><span>Sample Rate</span><output>44.1 kHz</output></cut-box>
                        <div class="brand">
                            <daw-icon name="logo"></daw-icon>
                            <div>Soun<b>dB</b>ridge</div>
                        </div>
                    </div>
                    <div class="group counter">
                        <cut-box class="lcd"><output>00:00: 15:483</output></cut-box>
                        <div class="status">HDD: <span class="led"></span> MIDI In: <span class="led"></span><daw-icon name="piano"></daw-icon></div>
                        <div class="status"><daw-slider value="48" label="Volume"></daw-slider></div>
                        <cut-box class="cpu"><i></i>CPU 4%</cut-box>
                        <cut-box class="blank"></cut-box>
                    </div>
                    <div class="group transport">
                        <daw-button class="cam"><daw-icon name="camIn"></daw-icon>In</daw-button>
                        <daw-button label="Record"><daw-icon name="record"></daw-icon></daw-button>
                        <daw-button label="Play"><daw-icon name="play"></daw-icon></daw-button>
                        <daw-button label="Stop"><daw-icon name="stop"></daw-icon></daw-button>
                        <small class="swing">Swing</small>
                        <daw-button class="cam"><daw-icon name="camOut"></daw-icon>Out</daw-button>
                        <daw-button label="Punch"><daw-icon name="punch"></daw-icon></daw-button>
                        <daw-button label="Swing"><daw-icon name="music"></daw-icon></daw-button>
                        <daw-button>Tap</daw-button>
                    </div>
                    <div class="group tempo">
                        <cut-box class="lcd"><output>124.000</output></cut-box>
                        <small>Count-In</small><small>Time Sig.</small>
                        <daw-button>1 Bar</daw-button>
                        <daw-button>4/4</daw-button>
                    </div>
                    <div class="group toggles">
                        <daw-toggle checked>Snap</daw-toggle>
                        <cut-box class="snap"><select aria-label="Snap grid"><option>Auto</option></select><daw-icon name="up"></daw-icon></cut-box>
                        <daw-toggle checked>Loop</daw-toggle>
                        <daw-toggle>Follow</daw-toggle>
                        <daw-toggle>Metro</daw-toggle>
                        <daw-toggle>Count</daw-toggle>
                    </div>
                    <div class="group tools">
                        <daw-button class="blue" label="Select"><daw-icon name="arrow"></daw-icon></daw-button>
                        <daw-button label="Draw"><daw-icon name="pencil"></daw-icon></daw-button>
                        <daw-button label="Cut"><daw-icon name="scissors"></daw-icon></daw-button>
                        <daw-button label="Mute"><daw-icon name="mute"></daw-icon></daw-button>
                        <daw-button class="help">?</daw-button>
                        <daw-button label="Undo"><daw-icon name="undo"></daw-icon></daw-button>
                        <daw-button label="Browser"><daw-icon name="tree"></daw-icon></daw-button>
                        <daw-button class="green" label="Arrange"><daw-icon name="grid"></daw-icon></daw-button>
                        <daw-button label="Automation"><daw-icon name="automation"></daw-icon></daw-button>
                        <daw-button label="Mixer"><daw-icon name="mixer"></daw-icon></daw-button>
                        <daw-button label="Rack"><daw-icon name="rack"></daw-icon></daw-button>
                        <daw-button dim label="Redo"><daw-icon name="redo"></daw-icon></daw-button>
                    </div>
                    <div class="group actions">
                        <daw-button>Split</daw-button>
                        <daw-button>Merge</daw-button>
                        <daw-button>Freeze</daw-button>
                        <daw-button>Adjust</daw-button>
                        <daw-button>Quantize</daw-button>
                        <daw-button>Duplicate</daw-button>
                    </div>
                </div>
            </cut-box>
        `;
    }
}
customElements.define('transport-bar', TransportBar);

class DawApp extends HTMLElement {
    constructor() {
        super();
        this.attachShadow({ mode: 'open' });
        this.shadowRoot.innerHTML = `
            <style>${BASE}
                :host {
                    display: flex;
                    flex-direction: column;
                    min-height: 100vh;
                    border: 1px solid #5c6062;
                }
                .top { display: flex; flex: 1; }
                track-panel { width: 312px; }
                arrange-view { flex: 1; min-width: 0; }
                .divider { position: relative; width: 1px; background: var(--line); }
                .divider cut-box {
                    position: absolute;
                    left: -9px;
                    top: 50%;
                    width: 19px;
                    height: 32px;
                    margin-top: -16px;
                    --tl: 6px; --tr: 6px; --br: 6px; --bl: 6px;
                    --rim: 0px;
                    --fill: #262c33;
                }
                .divider button { display: grid; place-items: center; width: 100%; padding: 0; border: 0; background: none; }
            </style>
            <div class="top">
                <track-panel></track-panel>
                <div class="divider">
                    <cut-box><button type="button" aria-label="Resize"><daw-icon name="split"></daw-icon></button></cut-box>
                </div>
                <arrange-view></arrange-view>
            </div>
            <transport-bar></transport-bar>
        `;
    }
}
customElements.define('daw-app', DawApp);
</script>
</body>
</html>
